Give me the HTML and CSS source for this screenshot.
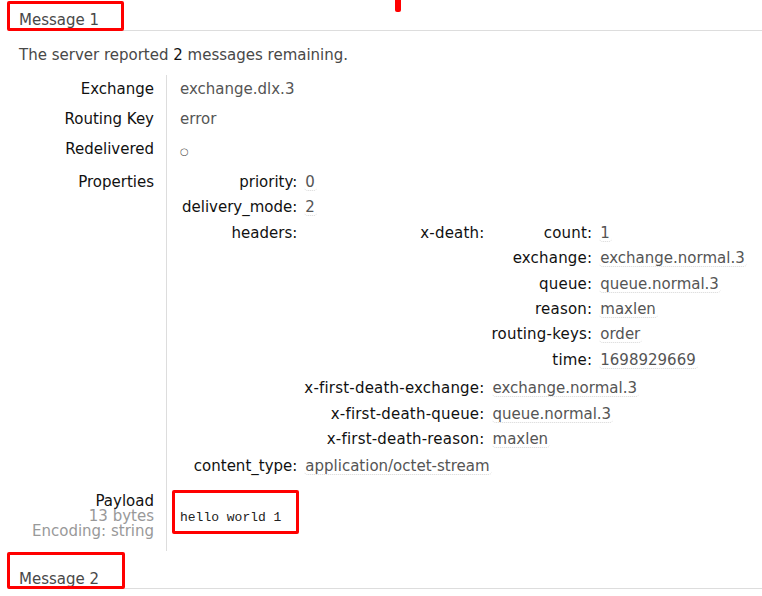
FILE: index.html
```html
<!DOCTYPE html>
<html>
<head>
<meta charset="utf-8">
<link rel="stylesheet" href="styles.css">
</head>
<body>
<div class="page">
  <span class="mark-top"></span>
  <h2 class="msg-head">Message 1<span class="anno anno-head"></span></h2>
  <p class="remaining">The server reported <b>2</b> messages remaining.</p>
  <table class="facts">
    <tr><th>Exchange</th><td>exchange.dlx.3</td></tr>
    <tr><th>Routing Key</th><td>error</td></tr>
    <tr><th>Redelivered</th><td><span class="circle">○</span></td></tr>
    <tr class="props-row">
      <th>Properties</th>
      <td class="props-cell">
        <table class="kv">
          <tr><th>priority:</th><td><span class="v">0</span></td></tr>
          <tr><th>delivery_mode:</th><td><span class="v">2</span></td></tr>
          <tr><th>headers:</th><td class="nest">
            <table class="kv">
              <tr><th>x-death:</th><td class="nest">
                <table class="kv">
                  <tr><th>count:</th><td><span class="v">1</span></td></tr>
                  <tr><th>exchange:</th><td><span class="v">exchange.normal.3</span></td></tr>
                  <tr><th>queue:</th><td><span class="v">queue.normal.3</span></td></tr>
                  <tr><th>reason:</th><td><span class="v">maxlen</span></td></tr>
                  <tr><th>routing-keys:</th><td><span class="v">order</span></td></tr>
                  <tr><th>time:</th><td><span class="v">1698929669</span></td></tr>
                </table>
              </td></tr>
              <tr class="gap3"><th>x-first-death-exchange:</th><td><span class="v">exchange.normal.3</span></td></tr>
              <tr><th>x-first-death-queue:</th><td><span class="v">queue.normal.3</span></td></tr>
              <tr><th>x-first-death-reason:</th><td><span class="v">maxlen</span></td></tr>
            </table>
          </td></tr>
          <tr class="gap2"><th>content_type:</th><td><span class="v">application/octet-stream</span></td></tr>
        </table>
      </td>
    </tr>
    <tr class="payload-row">
      <th>Payload<span class="sub">13 bytes</span><span class="sub">Encoding: string</span></th>
      <td><pre class="payload">hello world 1<span class="anno anno-pay"></span></pre></td>
    </tr>
  </table>
  <h2 class="msg-head msg2">Message 2<span class="anno anno-head2"></span></h2>
</div>
</body>
</html>
```

FILE: styles.css
```css
html, body {
  margin: 0;
  padding: 0;
  background: #fff;
}
body {
  font-family: "DejaVu Sans", Verdana, sans-serif;
  font-size: 15px;
  color: #484848;
}
.page {
  position: relative;
  width: 762px;
  height: 596px;
  overflow: hidden;
}
.mark-top {
  position: absolute;
  left: 395px;
  top: -4px;
  width: 6px;
  height: 16px;
  background: #f00;
  border-radius: 2px;
}
.msg-head {
  position: relative;
  margin: 0 0 0 10px;
  padding: 12px 0 1px 9px;
  font-size: 15px;
  font-weight: normal;
  line-height: 17px;
  color: #484848;
  border-bottom: 1px solid #ddd;
}
.msg2 {
  margin-top: 6px;
  padding-top: 14px;
  padding-bottom: 0;
}
.anno {
  position: absolute;
  border: 3px solid #f00;
  border-radius: 2px;
  pointer-events: none;
}
.anno-head {
  left: -3px;
  top: 1px;
  width: 111px;
  height: 24px;
}
.anno-head2 {
  left: -3px;
  top: -5px;
  width: 112px;
  height: 31px;
}
.remaining {
  margin: 16px 0 0 19px;
  line-height: 17px;
}
.remaining b {
  font-weight: normal;
  color: #111;
}
.facts {
  border-collapse: collapse;
  margin-top: 11px;
}
.facts > tbody > tr > th {
  width: 154px;
  padding: 6px 12px 7px 0;
  text-align: right;
  vertical-align: top;
  font-weight: normal;
  color: #111;
  line-height: 17px;
  border-right: 1px solid #ddd;
}
.facts > tbody > tr > td {
  padding: 6px 0 7px 13px;
  vertical-align: top;
  line-height: 17px;
  color: #555;
}
.facts > tbody > tr.props-row > th {
  padding-top: 9px;
}
.facts > tbody > tr > td.props-cell {
  padding-top: 5px;
  padding-left: 15px;
  padding-bottom: 3px;
}
.circle {
  font-size: 10px;
  line-height: 17px;
  vertical-align: top;
  position: relative;
  top: 2px;
}
.kv {
  border-collapse: collapse;
}
.kv th {
  text-align: right;
  vertical-align: top;
  font-weight: normal;
  color: #111;
  padding: 4px 7px 4px 0;
  line-height: 17px;
  white-space: nowrap;
}
.kv .kv th {
  letter-spacing: 0.2px;
}
.kv td {
  vertical-align: top;
  padding: 4px 0 4.4px;
  line-height: 17px;
  color: #555;
  white-space: nowrap;
}
.kv td.nest > .kv {
  margin-top: -4px;
  margin-bottom: -4.4px;
}
.kv tr.gap3 > th, .kv tr.gap3 > td {
  padding-top: 7px;
}
.kv tr.gap2 > th, .kv tr.gap2 > td {
  padding-top: 6px;
}
.v {
  display: inline-block;
  padding: 0 2px 0 1px;
  border-bottom: 1px dotted #d6d6d6;
  border-radius: 4px;
  line-height: 16px;
  vertical-align: top;
}
.facts > tbody > tr.payload-row > th,
.facts > tbody > tr.payload-row > td {
  padding-top: 11px;
  padding-bottom: 12px;
}
.facts > tbody > tr.payload-row > th {
  line-height: 15px;
}
.sub {
  display: block;
  color: #999;
}
.payload {
  position: relative;
  margin: 0;
  padding-top: 15px;
  font-family: "Liberation Mono", "Courier New", monospace;
  font-size: 13px;
  line-height: 17px;
  color: #222;
}
.anno-pay {
  left: -8px;
  top: -4px;
  width: 121px;
  height: 38px;
}
```
